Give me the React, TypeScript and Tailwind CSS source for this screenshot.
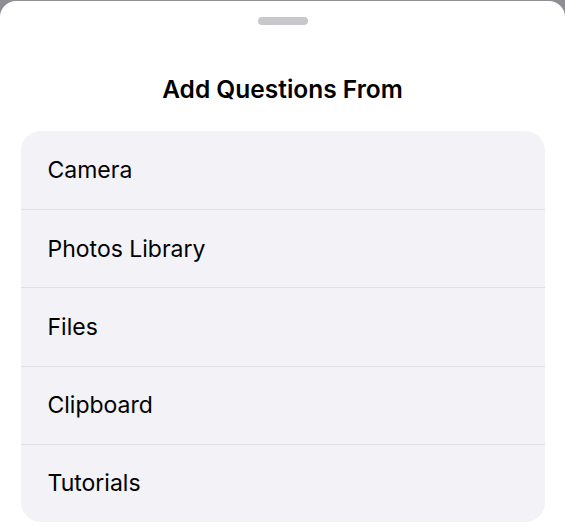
import React from 'react';

const sources = ['Camera', 'Photos Library', 'Files', 'Clipboard', 'Tutorials'];

export default function App() {
  return (
    <div
      className="w-[565px] h-[525px] overflow-hidden bg-[#8e8e93] pt-px"
      style={{ fontFamily: 'Inter, "Liberation Sans", sans-serif' }}
    >
      <div className="h-full bg-white rounded-t-[16px] flex flex-col items-center">
        {/* grabber */}
        <div className="mt-[16px] w-[50px] h-[8px] rounded-full bg-[#c7c7cc]" />

        <h1 className="mt-[50px] text-[24.5px] leading-[28px] font-semibold text-black">
          Add Questions From
        </h1>

        <div className="mt-[28px] w-[524px] rounded-[20px] bg-[#f2f2f7] overflow-hidden">
          {sources.map((s, i) => (
            <div
              key={s}
              className={`h-[78.2px] flex items-center px-[27px] text-[23px] text-black ${
                i > 0 ? 'border-t border-[#e0e0e6]' : ''
              }`}
            >
              {s}
            </div>
          ))}
        </div>
      </div>
    </div>
  );
}
